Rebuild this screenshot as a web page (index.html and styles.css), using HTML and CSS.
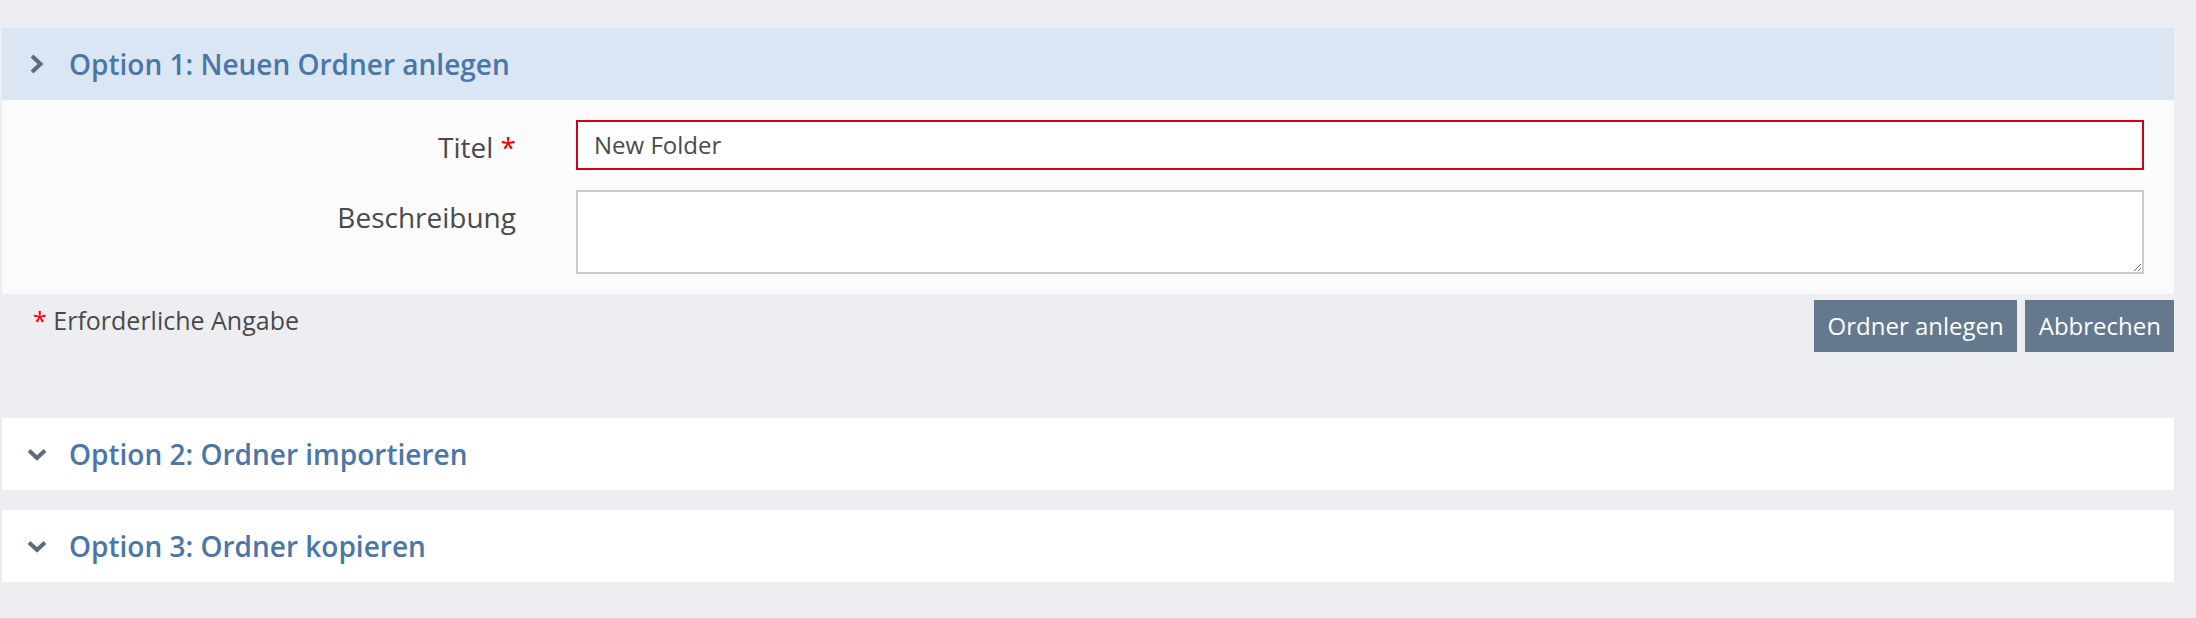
FILE: index.html
```html
<!DOCTYPE html>
<html lang="de">
<head>
<meta charset="utf-8">
<title>Ordner</title>
<link rel="stylesheet" href="styles.css">
</head>
<body>
<div class="wrap">
  <section class="panel">
    <div class="panel-head active">
      <svg class="chev" width="14" height="22" viewBox="0 0 14 22"><path d="M2 3 L10.5 11 L2 19" fill="none" stroke="#5f6b7a" stroke-width="4"/></svg>
      <span class="panel-title">Option 1: Neuen Ordner anlegen</span>
    </div>
    <div class="panel-body">
      <div class="form-grid">
        <label class="lbl" for="t">Titel <span class="req">*</span></label>
        <input id="t" class="field invalid" type="text" value="New Folder">
        <label class="lbl" for="d">Beschreibung</label>
        <textarea id="d" class="field area"></textarea>
      </div>
    </div>
    <div class="panel-foot">
      <div class="hint"><span class="req">*</span> Erforderliche Angabe</div>
      <div class="btns">
        <button class="btn">Ordner anlegen</button>
        <button class="btn">Abbrechen</button>
      </div>
    </div>
  </section>
  <section class="panel closed first-closed">
    <div class="panel-head">
      <svg class="chev-down" width="22" height="14" viewBox="0 0 22 14"><path d="M3 2.5 L11 10 L19 2.5" fill="none" stroke="#5f6b7a" stroke-width="4"/></svg>
      <span class="panel-title">Option 2: Ordner importieren</span>
    </div>
  </section>
  <section class="panel closed">
    <div class="panel-head">
      <svg class="chev-down" width="22" height="14" viewBox="0 0 22 14"><path d="M3 2.5 L11 10 L19 2.5" fill="none" stroke="#5f6b7a" stroke-width="4"/></svg>
      <span class="panel-title">Option 3: Ordner kopieren</span>
    </div>
  </section>
</div>
</body>
</html>
```
FILE: styles.css
```css
html, body {
  margin: 0;
  padding: 0;
  background: #edeef2;
  font-family: "Open Sans", "Liberation Sans", sans-serif;
  color: #4a4a4a;
}
.wrap {
  padding: 28px 22px 0 2px;
}
.panel-head {
  height: 72px;
  display: flex;
  align-items: center;
  background: #ffffff;
  padding-left: 28px;
  box-sizing: border-box;
}
.panel-head.active {
  background: #dae6f3;
}
.chev {
  flex: none;
  margin-right: 25px;
}
.chev-down {
  flex: none;
  margin-left: -4px;
  margin-right: 21px;
  position: relative;
  top: 1px;
}
.panel-title {
  font-size: 28px;
  font-weight: 600;
  color: #4a76a8;
  line-height: 40px;
}
.panel-body {
  background: #fbfbfb;
  padding: 20px 30px 20px 0;
}
.form-grid {
  display: grid;
  grid-template-columns: 514px 1fr;
  column-gap: 60px;
  row-gap: 20px;
}
.lbl {
  text-align: right;
  font-size: 28px;
  line-height: 40px;
  padding-top: 7px;
  color: #4a4a4a;
}
.req {
  color: #f00000;
}
.field {
  display: block;
  box-sizing: border-box;
  width: 100%;
  margin: 0;
  font-family: inherit;
  font-size: 24px;
  color: #4a4a4a;
  background: #fff;
  border: 2px solid #cccccc;
  border-radius: 0;
  outline: none;
}
.field.invalid {
  height: 50px;
  border-color: #d0021b;
  padding: 0 16px 2px;
}
.field.area {
  height: 84px;
  padding: 8px 16px;
  resize: vertical;
}
.panel-foot {
  display: flex;
  justify-content: space-between;
  align-items: flex-start;
  padding-left: 31px;
  margin-top: 6px;
}
.hint {
  font-size: 25px;
  line-height: 40px;
  color: #4a4a4a;
}
.btns {
  display: flex;
  gap: 8px;
}
.btn {
  height: 52px;
  border: 0;
  margin: 0;
  padding: 0 13px 2px 14px;
  background: #64788e;
  color: #ffffff;
  font-family: inherit;
  font-size: 24px;
  border-radius: 0;
}
.closed {
  margin-top: 20px;
}
.first-closed {
  margin-top: 66px;
}
```
